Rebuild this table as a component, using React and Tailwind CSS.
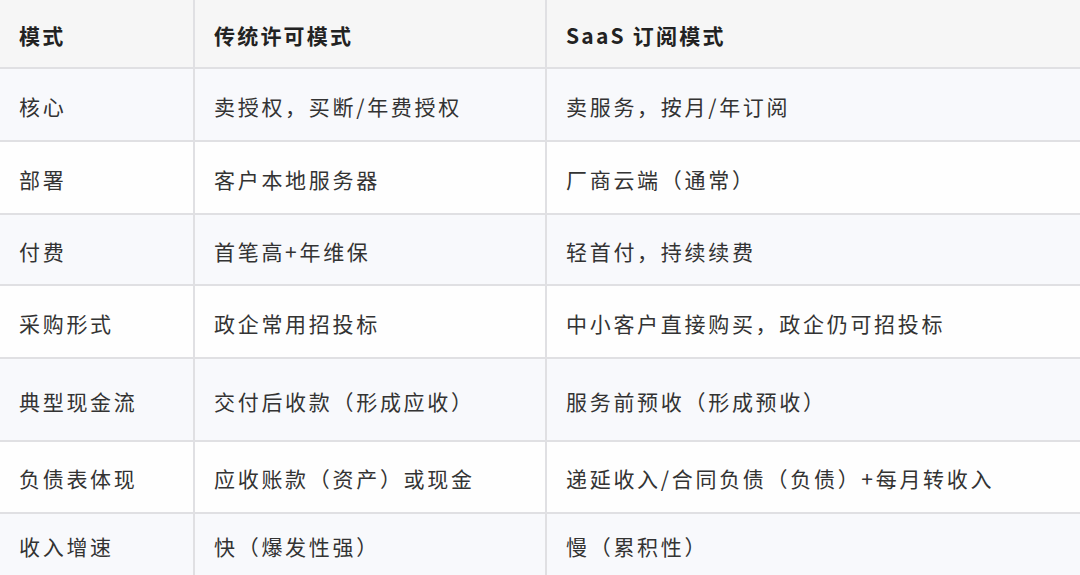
const rows = [
  { h: "h-[73px]", bg: "bg-[#f8f9fc]", cells: ["核心", "卖授权，买断/年费授权", "卖服务，按月/年订阅"] },
  { h: "h-[73px]", bg: "bg-[#fefefe]", cells: ["部署", "客户本地服务器", "厂商云端（通常）"] },
  { h: "h-[71px]", bg: "bg-[#f8f9fc]", cells: ["付费", "首笔高+年维保", "轻首付，持续续费"] },
  { h: "h-[73px]", bg: "bg-[#fefefe]", cells: ["采购形式", "政企常用招投标", "中小客户直接购买，政企仍可招投标"] },
  { h: "h-[83px]", bg: "bg-[#f8f9fc]", cells: ["典型现金流", "交付后收款（形成应收）", "服务前预收（形成预收）"] },
  { h: "h-[72px]", bg: "bg-[#fefefe]", cells: ["负债表体现", "应收账款（资产）或现金", "递延收入/合同负债（负债）+每月转收入"] },
  { h: "h-[61px]", bg: "bg-[#f8f9fc]", cells: ["收入增速", "快（爆发性强）", "慢（累积性）"] },
];

function Row({ cells, h, bg, head, last }) {
  return (
    <div
      className={`grid grid-cols-[195px_352px_1fr] ${h} ${bg} ${last ? "" : "border-b-2 border-[#e0e0e3]"}`}
    >
      {cells.map((c, i) => (
        <div
          key={i}
          className={`flex items-center pl-[19px] pt-[4px] ${i < 2 ? "border-r-2 border-[#e0e0e3]" : ""} ${
            head ? "font-semibold text-[#222] tracking-[2.2px]" : "text-[#333]"
          }`}
        >
          {c}
        </div>
      ))}
    </div>
  );
}

export default function App() {
  return (
    <div className="w-[1080px] h-[575px] overflow-hidden bg-white text-[21px] tracking-[2.7px] font-['Noto_Sans_CJK_SC','Noto_Sans',sans-serif]">
      <Row head h="h-[69px]" bg="bg-[#f6f6f6]" cells={["模式", "传统许可模式", "SaaS 订阅模式"]} />
      {rows.map((r, i) => (
        <Row key={i} {...r} last={i === rows.length - 1} />
      ))}
    </div>
  );
}
